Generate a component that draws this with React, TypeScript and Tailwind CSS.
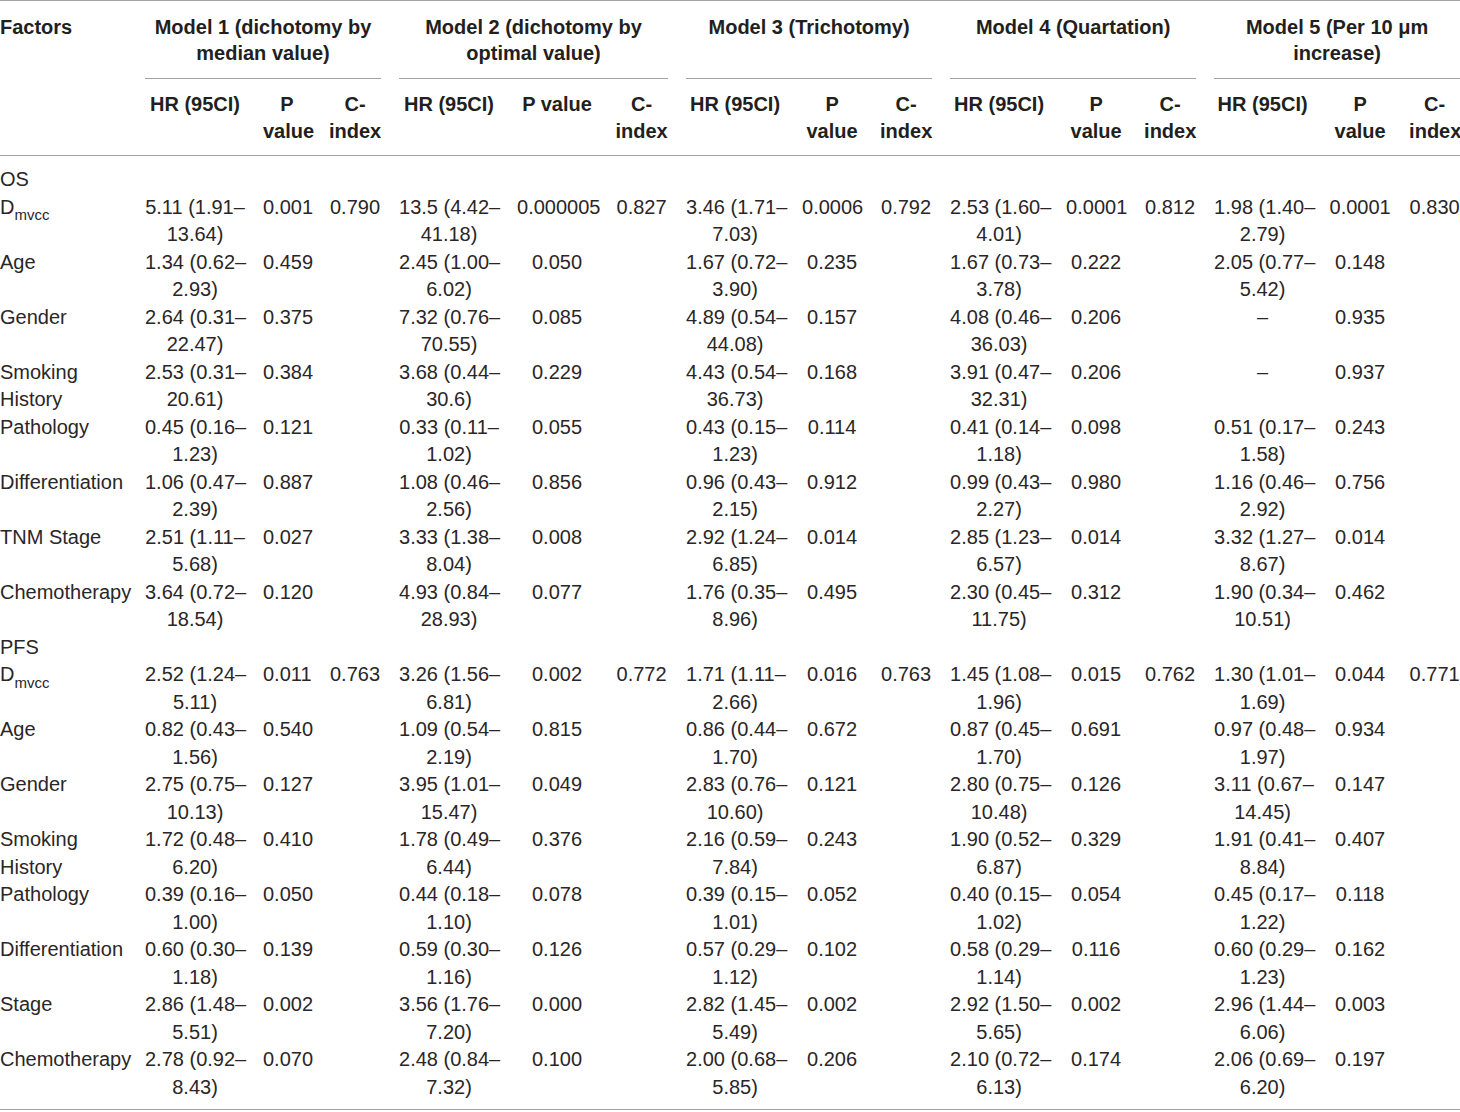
import React from "react";

type Model = [string, string, string?];
type Row = { label: React.ReactNode; cells: Model[] };

const Dmvcc = (
  <span>
    D<sub className="text-[15px] align-[-3px] leading-none">mvcc</sub>
  </span>
);

const osRows: Row[] = [
  {
    label: Dmvcc,
    cells: [
      ["5.11 (1.91–13.64)", "0.001", "0.790"],
      ["13.5 (4.42–41.18)", "0.000005", "0.827"],
      ["3.46 (1.71–7.03)", "0.0006", "0.792"],
      ["2.53 (1.60–4.01)", "0.0001", "0.812"],
      ["1.98 (1.40–2.79)", "0.0001", "0.830"],
    ],
  },
  {
    label: "Age",
    cells: [
      ["1.34 (0.62–2.93)", "0.459"],
      ["2.45 (1.00–6.02)", "0.050"],
      ["1.67 (0.72–3.90)", "0.235"],
      ["1.67 (0.73–3.78)", "0.222"],
      ["2.05 (0.77–5.42)", "0.148"],
    ],
  },
  {
    label: "Gender",
    cells: [
      ["2.64 (0.31–22.47)", "0.375"],
      ["7.32 (0.76–70.55)", "0.085"],
      ["4.89 (0.54–44.08)", "0.157"],
      ["4.08 (0.46–36.03)", "0.206"],
      ["–", "0.935"],
    ],
  },
  {
    label: (
      <>
        Smoking
        <br />
        History
      </>
    ),
    cells: [
      ["2.53 (0.31–20.61)", "0.384"],
      ["3.68 (0.44–30.6)", "0.229"],
      ["4.43 (0.54–36.73)", "0.168"],
      ["3.91 (0.47–32.31)", "0.206"],
      ["–", "0.937"],
    ],
  },
  {
    label: "Pathology",
    cells: [
      ["0.45 (0.16–1.23)", "0.121"],
      ["0.33 (0.11–1.02)", "0.055"],
      ["0.43 (0.15–1.23)", "0.114"],
      ["0.41 (0.14–1.18)", "0.098"],
      ["0.51 (0.17–1.58)", "0.243"],
    ],
  },
  {
    label: "Differentiation",
    cells: [
      ["1.06 (0.47–2.39)", "0.887"],
      ["1.08 (0.46–2.56)", "0.856"],
      ["0.96 (0.43–2.15)", "0.912"],
      ["0.99 (0.43–2.27)", "0.980"],
      ["1.16 (0.46–2.92)", "0.756"],
    ],
  },
  {
    label: "TNM Stage",
    cells: [
      ["2.51 (1.11–5.68)", "0.027"],
      ["3.33 (1.38–8.04)", "0.008"],
      ["2.92 (1.24–6.85)", "0.014"],
      ["2.85 (1.23–6.57)", "0.014"],
      ["3.32 (1.27–8.67)", "0.014"],
    ],
  },
  {
    label: "Chemotherapy",
    cells: [
      ["3.64 (0.72–18.54)", "0.120"],
      ["4.93 (0.84–28.93)", "0.077"],
      ["1.76 (0.35–8.96)", "0.495"],
      ["2.30 (0.45–11.75)", "0.312"],
      ["1.90 (0.34–10.51)", "0.462"],
    ],
  },
];

const pfsRows: Row[] = [
  {
    label: Dmvcc,
    cells: [
      ["2.52 (1.24–5.11)", "0.011", "0.763"],
      ["3.26 (1.56–6.81)", "0.002", "0.772"],
      ["1.71 (1.11–2.66)", "0.016", "0.763"],
      ["1.45 (1.08–1.96)", "0.015", "0.762"],
      ["1.30 (1.01–1.69)", "0.044", "0.771"],
    ],
  },
  {
    label: "Age",
    cells: [
      ["0.82 (0.43–1.56)", "0.540"],
      ["1.09 (0.54–2.19)", "0.815"],
      ["0.86 (0.44–1.70)", "0.672"],
      ["0.87 (0.45–1.70)", "0.691"],
      ["0.97 (0.48–1.97)", "0.934"],
    ],
  },
  {
    label: "Gender",
    cells: [
      ["2.75 (0.75–10.13)", "0.127"],
      ["3.95 (1.01–15.47)", "0.049"],
      ["2.83 (0.76–10.60)", "0.121"],
      ["2.80 (0.75–10.48)", "0.126"],
      ["3.11 (0.67–14.45)", "0.147"],
    ],
  },
  {
    label: (
      <>
        Smoking
        <br />
        History
      </>
    ),
    cells: [
      ["1.72 (0.48–6.20)", "0.410"],
      ["1.78 (0.49–6.44)", "0.376"],
      ["2.16 (0.59–7.84)", "0.243"],
      ["1.90 (0.52–6.87)", "0.329"],
      ["1.91 (0.41–8.84)", "0.407"],
    ],
  },
  {
    label: "Pathology",
    cells: [
      ["0.39 (0.16–1.00)", "0.050"],
      ["0.44 (0.18–1.10)", "0.078"],
      ["0.39 (0.15–1.01)", "0.052"],
      ["0.40 (0.15–1.02)", "0.054"],
      ["0.45 (0.17–1.22)", "0.118"],
    ],
  },
  {
    label: "Differentiation",
    cells: [
      ["0.60 (0.30–1.18)", "0.139"],
      ["0.59 (0.30–1.16)", "0.126"],
      ["0.57 (0.29–1.12)", "0.102"],
      ["0.58 (0.29–1.14)", "0.116"],
      ["0.60 (0.29–1.23)", "0.162"],
    ],
  },
  {
    label: "Stage",
    cells: [
      ["2.86 (1.48–5.51)", "0.002"],
      ["3.56 (1.76–7.20)", "0.000"],
      ["2.82 (1.45–5.49)", "0.002"],
      ["2.92 (1.50–5.65)", "0.002"],
      ["2.96 (1.44–6.06)", "0.003"],
    ],
  },
  {
    label: "Chemotherapy",
    cells: [
      ["2.78 (0.92–8.43)", "0.070"],
      ["2.48 (0.84–7.32)", "0.100"],
      ["2.00 (0.68–5.85)", "0.206"],
      ["2.10 (0.72–6.13)", "0.174"],
      ["2.06 (0.69–6.20)", "0.197"],
    ],
  },
];

const colWidths = [136, 118, 66, 70, 118, 98, 71, 116, 78, 70, 116, 78, 70, 115, 80, 69];

const groups: React.ReactNode[] = [
  <>Model 1 (dichotomy by<br />median value)</>,
  <>Model 2 (dichotomy by<br />optimal value)</>,
  <>Model 3 (Trichotomy)</>,
  <>Model 4 (Quartation)</>,
  <>Model 5 (Per 10 μm<br />increase)</>,
];

// P value fits on one line only in model 2
const pHeads = [false, true, false, false, false];

function hr(text: string) {
  const i = text.indexOf("–");
  if (i < 0 || text === "–") return text;
  return (
    <>
      {text.slice(0, i + 1)}
      <br />
      {text.slice(i + 1)}
    </>
  );
}

function BodyRows({ rows, last }: { rows: Row[]; last?: boolean }) {
  return (
    <>
      {rows.map((r, ri) => {
        const pad = last && ri === rows.length - 1 ? "pb-[8px]" : "";
        return (
          <tr key={ri} className="align-top">
            <td className={`pr-1 text-left whitespace-nowrap ${pad}`}>{r.label}</td>
            {r.cells.map((c, ci) => (
              <React.Fragment key={ci}>
                <td className={`px-[9px] text-center whitespace-nowrap ${pad}`}>{hr(c[0])}</td>
                <td className={`px-[9px] text-center whitespace-nowrap ${pad}`}>{c[1]}</td>
                <td className={`px-[9px] text-center whitespace-nowrap ${pad}`}>{c[2] ?? ""}</td>
              </React.Fragment>
            ))}
          </tr>
        );
      })}
    </>
  );
}

export default function App() {
  return (
    <div className="w-[1460px] h-[1112px] overflow-hidden bg-white">
      <table className="w-[1469px] table-fixed border-separate border-spacing-0 border-t border-b border-[#a3a3a3] font-['Liberation_Sans',Arial,sans-serif] text-[20px] text-[#2a2627]">
        <colgroup>
          {colWidths.map((w, i) => (
            <col key={i} style={{ width: w }} />
          ))}
        </colgroup>
        <thead className="font-bold text-[#231f20]">
          <tr className="align-top">
            <th
              rowSpan={2}
              className="pt-[13px] text-left leading-[26px] border-b border-[#a3a3a3]"
            >
              Factors
            </th>
            {groups.map((g, i) => (
              <th key={i} colSpan={3} className="pt-[13px] text-center leading-[26px] whitespace-nowrap">
                <div className="mx-[9px] h-[65px] pb-[12px] border-b border-[#a3a3a3]">{g}</div>
              </th>
            ))}
          </tr>
          <tr className="align-top">
            {pHeads.map((oneLine, i) => (
              <React.Fragment key={i}>
                <th className="px-[9px] pt-[12px] pb-[10px] leading-[27px] text-center whitespace-nowrap border-b border-[#a3a3a3]">
                  HR (95CI)
                </th>
                <th className="px-[9px] pt-[12px] pb-[10px] leading-[27px] text-center whitespace-nowrap border-b border-[#a3a3a3]">
                  {oneLine ? "P value" : <>P<br />value</>}
                </th>
                <th className="px-[9px] pt-[12px] pb-[10px] leading-[27px] text-center whitespace-nowrap border-b border-[#a3a3a3]">
                  C-
                  <br />
                  index
                </th>
              </React.Fragment>
            ))}
          </tr>
        </thead>
        <tbody className="leading-[27.5px]">
          <tr className="align-top">
            <td colSpan={16} className="pt-[10px] text-left">OS</td>
          </tr>
          <BodyRows rows={osRows} />
          <tr className="align-top">
            <td colSpan={16} className="text-left">PFS</td>
          </tr>
          <BodyRows rows={pfsRows} last />
        </tbody>
      </table>
    </div>
  );
}
